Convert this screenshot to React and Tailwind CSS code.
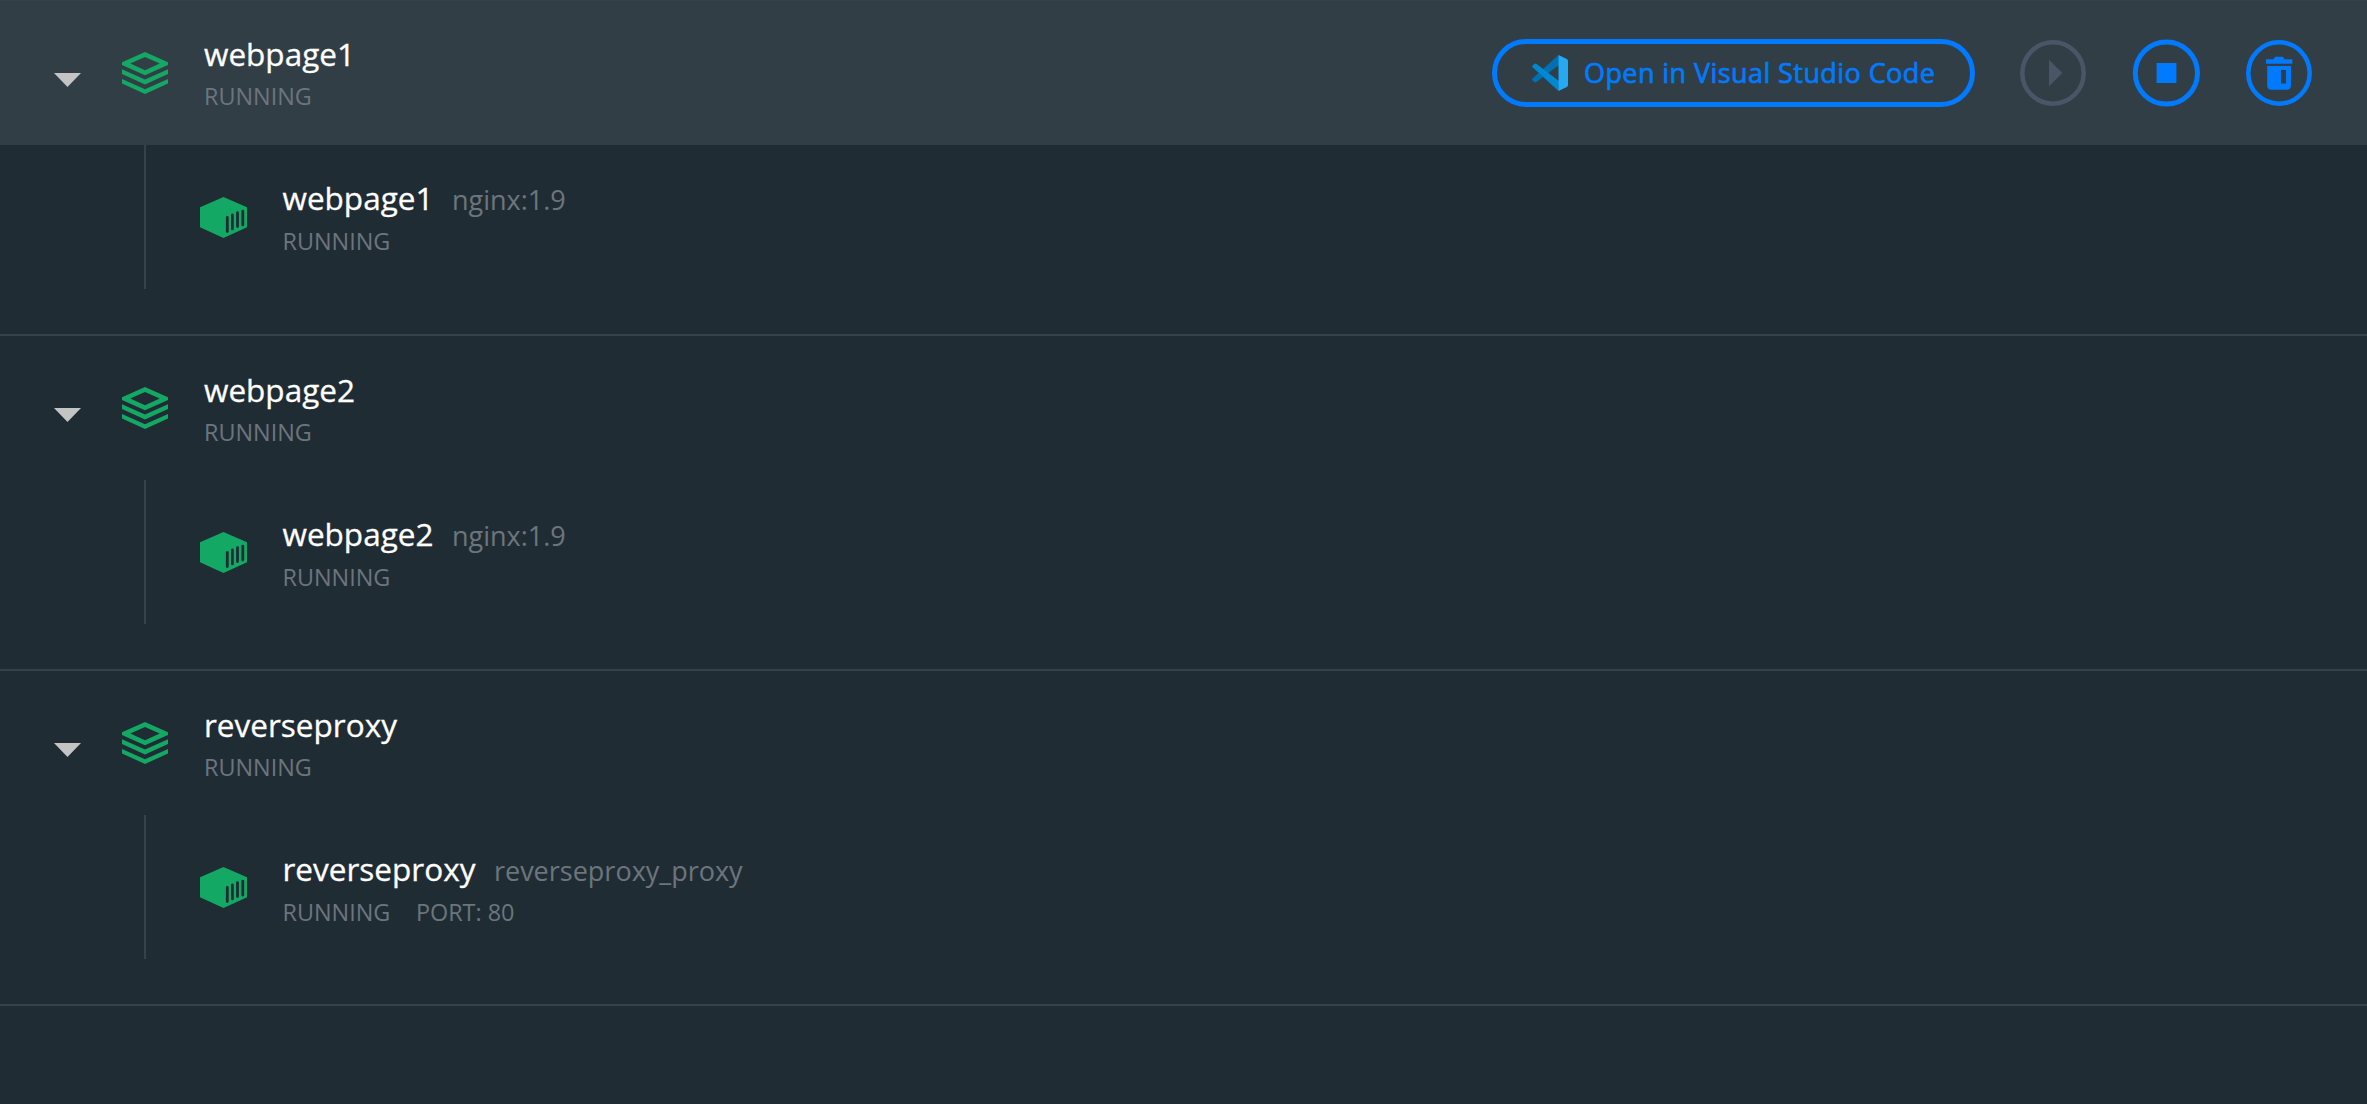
const groups = [
  { name: 'webpage1', image: 'nginx:1.9', active: true },
  { name: 'webpage2', image: 'nginx:1.9' },
  { name: 'reverseproxy', image: 'reverseproxy_proxy', port: 'PORT: 80' },
];

function StackIcon() {
  return (
    <svg className="ml-[41px] h-[42px] w-[46px] shrink-0" viewBox="0 0 46 42" fill="#13a863">
      <path fillRule="evenodd" d="M23 0 46 10.2V13L23 23.3 0 13V10.2ZM23 5 8.3 11.6 23 18.2 37.7 11.6Z" />
      <path d="M0 17.3 23 27.6 46 17.3V22L23 32.4 0 22Z" />
      <path d="M0 27 23 37.2 46 27V31.6L23 42 0 31.6Z" />
    </svg>
  );
}

function ContainerIcon() {
  return (
    <svg className="ml-[54px] h-[41px] w-[47px] shrink-0" viewBox="0 0 47 41">
      <path d="M23.5 0 47 10.3V30.3L23.5 41 0 30.3V10.3Z" fill="#13a863" />
      <path d="M27.3 20.5V34.5M32.4 17.9V31.9M37.5 15.6V29.6M42.8 14.1V28.1" stroke="#202c34" strokeWidth="2.8" strokeLinecap="round" />
    </svg>
  );
}

function VsCodeIcon() {
  return (
    <svg className="h-9 w-9 shrink-0" viewBox="0 0 36 36">
      <path d="M26.5 0 0.6 23.5Q-0.3 24.5 0.6 25.5L2.6 27.2Q3.5 27.8 4.5 27.1L27 10Z" fill="#0070b3" />
      <path d="M26.5 36 0.6 12.3Q-0.3 11.3 0.6 10.4L2.6 8.8Q3.5 8.2 4.5 8.9L27 26Z" fill="#0088d1" />
      <path d="M26.5 0 34.8 4Q36 4.6 36 6V30Q36 31.4 34.8 32L26.5 36Z" fill="#25a9f2" />
    </svg>
  );
}

function Label({ name, image, port, active }) {
  return (
    <div className={active ? '-mt-0.5 flex flex-col gap-[5px] whitespace-nowrap' : 'flex flex-col gap-[5px] whitespace-nowrap'}>
      <div className="flex items-baseline">
        <span className="text-[31.5px] leading-[43px] text-white [-webkit-text-stroke:0.3px_#fff]">{name}</span>
        {image && <span className="ml-[18.5px] text-[27px] leading-[40px] text-[#6c757d]">{image}</span>}
      </div>
      <div className="flex gap-[25.5px] text-[23.4px] leading-[32px] text-[#6c757d]">
        <span>RUNNING</span>
        {port && <span>{port}</span>}
      </div>
    </div>
  );
}

function Actions() {
  return (
    <div className="mr-[54px] ml-auto flex items-center">
      <button className="flex h-[68px] w-[483px] items-center rounded-full border-5 border-[#007bff] pl-[35px] text-[27px] tracking-[0.42px] whitespace-nowrap text-[#007bff] [-webkit-text-stroke:0.7px_#007bff]">
        <VsCodeIcon />
        <span className="ml-4">Open in Visual Studio Code</span>
      </button>
      <svg className="ml-[44px] size-[68px]" viewBox="0 0 68 68">
        <circle cx="34" cy="34" r="30.7" fill="none" stroke="#4a5568" strokeWidth="4.5" />
        <path d="M30 20.7 43.3 34 30 47.3Z" fill="#4a5568" />
      </svg>
      <svg className="ml-[45px] size-[68px]" viewBox="0 0 68 68">
        <circle cx="34.4" cy="34" r="31.1" fill="none" stroke="#007bff" strokeWidth="5" />
        <path d="M24.6 24H44.4V44H24.6Z" fill="#007bff" />
      </svg>
      <svg className="ml-[45px] size-[68px]" viewBox="0 0 68 68" fill="#007bff">
        <circle cx="34" cy="34" r="30.7" fill="none" stroke="#007bff" strokeWidth="4.5" />
        <path d="M21 20.2H29V19.2Q30 17.8 31 17.8H37Q38 17.8 39 19.2V20.2H47.3V24.8H21Z" />
        <path fillRule="evenodd" d="M22.2 27H46V46.3Q46 50.8 41.5 50.8H26.7Q22.2 50.8 22.2 46.3ZM36 31V44.5H41V31Z" />
      </svg>
    </div>
  );
}

function Group({ group }) {
  return (
    <section className="h-[335px] border-b-2 border-[#36424a]">
      <header className={group.active ? 'flex h-36 items-center bg-[#313e46]' : 'flex h-36 items-center'}>
        <svg className="mt-[14px] ml-[54px] h-[14px] w-[27px] shrink-0" viewBox="0 0 27 14">
          <path d="M0 0H27L13.5 14Z" fill="#c4c4c4" />
        </svg>
        <StackIcon />
        <div className="ml-[36px]">
          <Label name={group.name} active={group.active} />
        </div>
        {group.active && <Actions />}
      </header>
      <div className="ml-36 flex h-36 items-center border-l-2 border-[#36424a]">
        <ContainerIcon />
        <div className="ml-[35.5px]">
          <Label name={group.name} image={group.image} port={group.port} active={group.active} />
        </div>
      </div>
    </section>
  );
}

export default function App() {
  return (
    <main className="h-[1104px] w-[2367px] overflow-hidden border-t border-[#36424a] bg-[#202c34] font-['Open_Sans',sans-serif]">
      {groups.map((group) => (
        <Group key={group.name} group={group} />
      ))}
    </main>
  );
}
